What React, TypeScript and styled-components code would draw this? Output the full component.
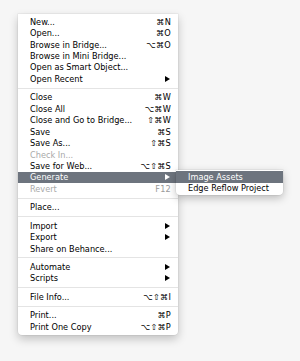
import styled, { createGlobalStyle } from "styled-components";

const GlobalStyle = createGlobalStyle`
    html, body {
        margin: 0;
        background: #f6f6f6;
    }
`;

const Page = styled.div`
    height: 361px;
    padding: 14px 0 0 18px;
    box-sizing: border-box;
    font-family: "DejaVu Sans", "Noto Sans", sans-serif;
`;

const Menu = styled.div`
    position: relative;
    width: 160px;
    padding: 2px 0;
    background: #ffffff;
    border-radius: 0 0 4px 4px;
    box-shadow: 0 0 0 0.5px rgba(0, 0, 0, 0.08), 0 4px 10px rgba(0, 0, 0, 0.22);
`;

const Row = styled.div<{ $active?: boolean; $disabled?: boolean; $indent?: number }>`
    position: relative;
    display: flex;
    align-items: center;
    height: 11.45px;
    padding: 0 7px 0 ${(p) => p.$indent ?? 12}px;
    font-size: 8.2px;
    white-space: nowrap;
    color: ${(p) => (p.$active ? "#ffffff" : p.$disabled ? "#a9a9a9" : "#000000")};
    background: ${(p) => (p.$active ? "#6d747e" : "transparent")};
`;

const Label = styled.span`
    flex: 1;
`;

const Shortcut = styled.span<{ $disabled?: boolean }>`
    font-size: 8.2px;
    letter-spacing: 0.2px;
    color: ${(p) => (p.$disabled ? "#9a9a9a" : "inherit")};
`;

const Separator = styled.div`
    height: 1px;
    margin: 3px 0;
    background: #e4e4e4;
`;

const Submenu = styled.div`
    position: absolute;
    top: -1.5px;
    left: 158px;
    width: 107px;
    padding: 1px 0;
    background: #ffffff;
    border-radius: 0 0 4px 4px;
    box-shadow: 0 0 0 0.5px rgba(0, 0, 0, 0.08), 0 3px 8px rgba(0, 0, 0, 0.25);
    z-index: 2;
`;

function Arrow() {
    return (
        <svg width="5" height="6" viewBox="0 0 5 6" style={{ marginRight: 1 }}>
            <polygon points="0,0 5,3 0,6" fill="currentColor" />
        </svg>
    );
}

type Item = { label: string; key?: string; sub?: boolean; disabled?: boolean };

const sections: Item[][] = [
    [
        { label: "New...", key: "⌘N" },
        { label: "Open...", key: "⌘O" },
        { label: "Browse in Bridge...", key: "⌥⌘O" },
        { label: "Browse in Mini Bridge..." },
        { label: "Open as Smart Object..." },
        { label: "Open Recent", sub: true },
    ],
    [
        { label: "Close", key: "⌘W" },
        { label: "Close All", key: "⌥⌘W" },
        { label: "Close and Go to Bridge...", key: "⇧⌘W" },
        { label: "Save", key: "⌘S" },
        { label: "Save As...", key: "⇧⌘S" },
        { label: "Check In...", disabled: true },
        { label: "Save for Web...", key: "⌥⇧⌘S" },
        { label: "Generate", sub: true },
        { label: "Revert", key: "F12", disabled: true },
    ],
    [{ label: "Place..." }],
    [
        { label: "Import", sub: true },
        { label: "Export", sub: true },
        { label: "Share on Behance..." },
    ],
    [
        { label: "Automate", sub: true },
        { label: "Scripts", sub: true },
    ],
    [{ label: "File Info...", key: "⌥⇧⌘I" }],
    [
        { label: "Print...", key: "⌘P" },
        { label: "Print One Copy", key: "⌥⇧⌘P" },
    ],
];

export default function App() {
    return (
        <>
            <GlobalStyle />
            <Page>
                <Menu>
                    {sections.map((items, i) => (
                        <div key={i}>
                            {i > 0 && <Separator />}
                            {items.map((item) => {
                                const active = item.label === "Generate";
                                return (
                                    <Row key={item.label} $active={active} $disabled={item.disabled}>
                                        <Label>{item.label}</Label>
                                        {item.key && <Shortcut $disabled={item.disabled}>{item.key}</Shortcut>}
                                        {item.sub && <Arrow />}
                                        {active && (
                                            <Submenu>
                                                <Row $active $indent={12}>Image Assets</Row>
                                                <Row $indent={12}>Edge Reflow Project</Row>
                                            </Submenu>
                                        )}
                                    </Row>
                                );
                            })}
                        </div>
                    ))}
                </Menu>
            </Page>
        </>
    );
}
